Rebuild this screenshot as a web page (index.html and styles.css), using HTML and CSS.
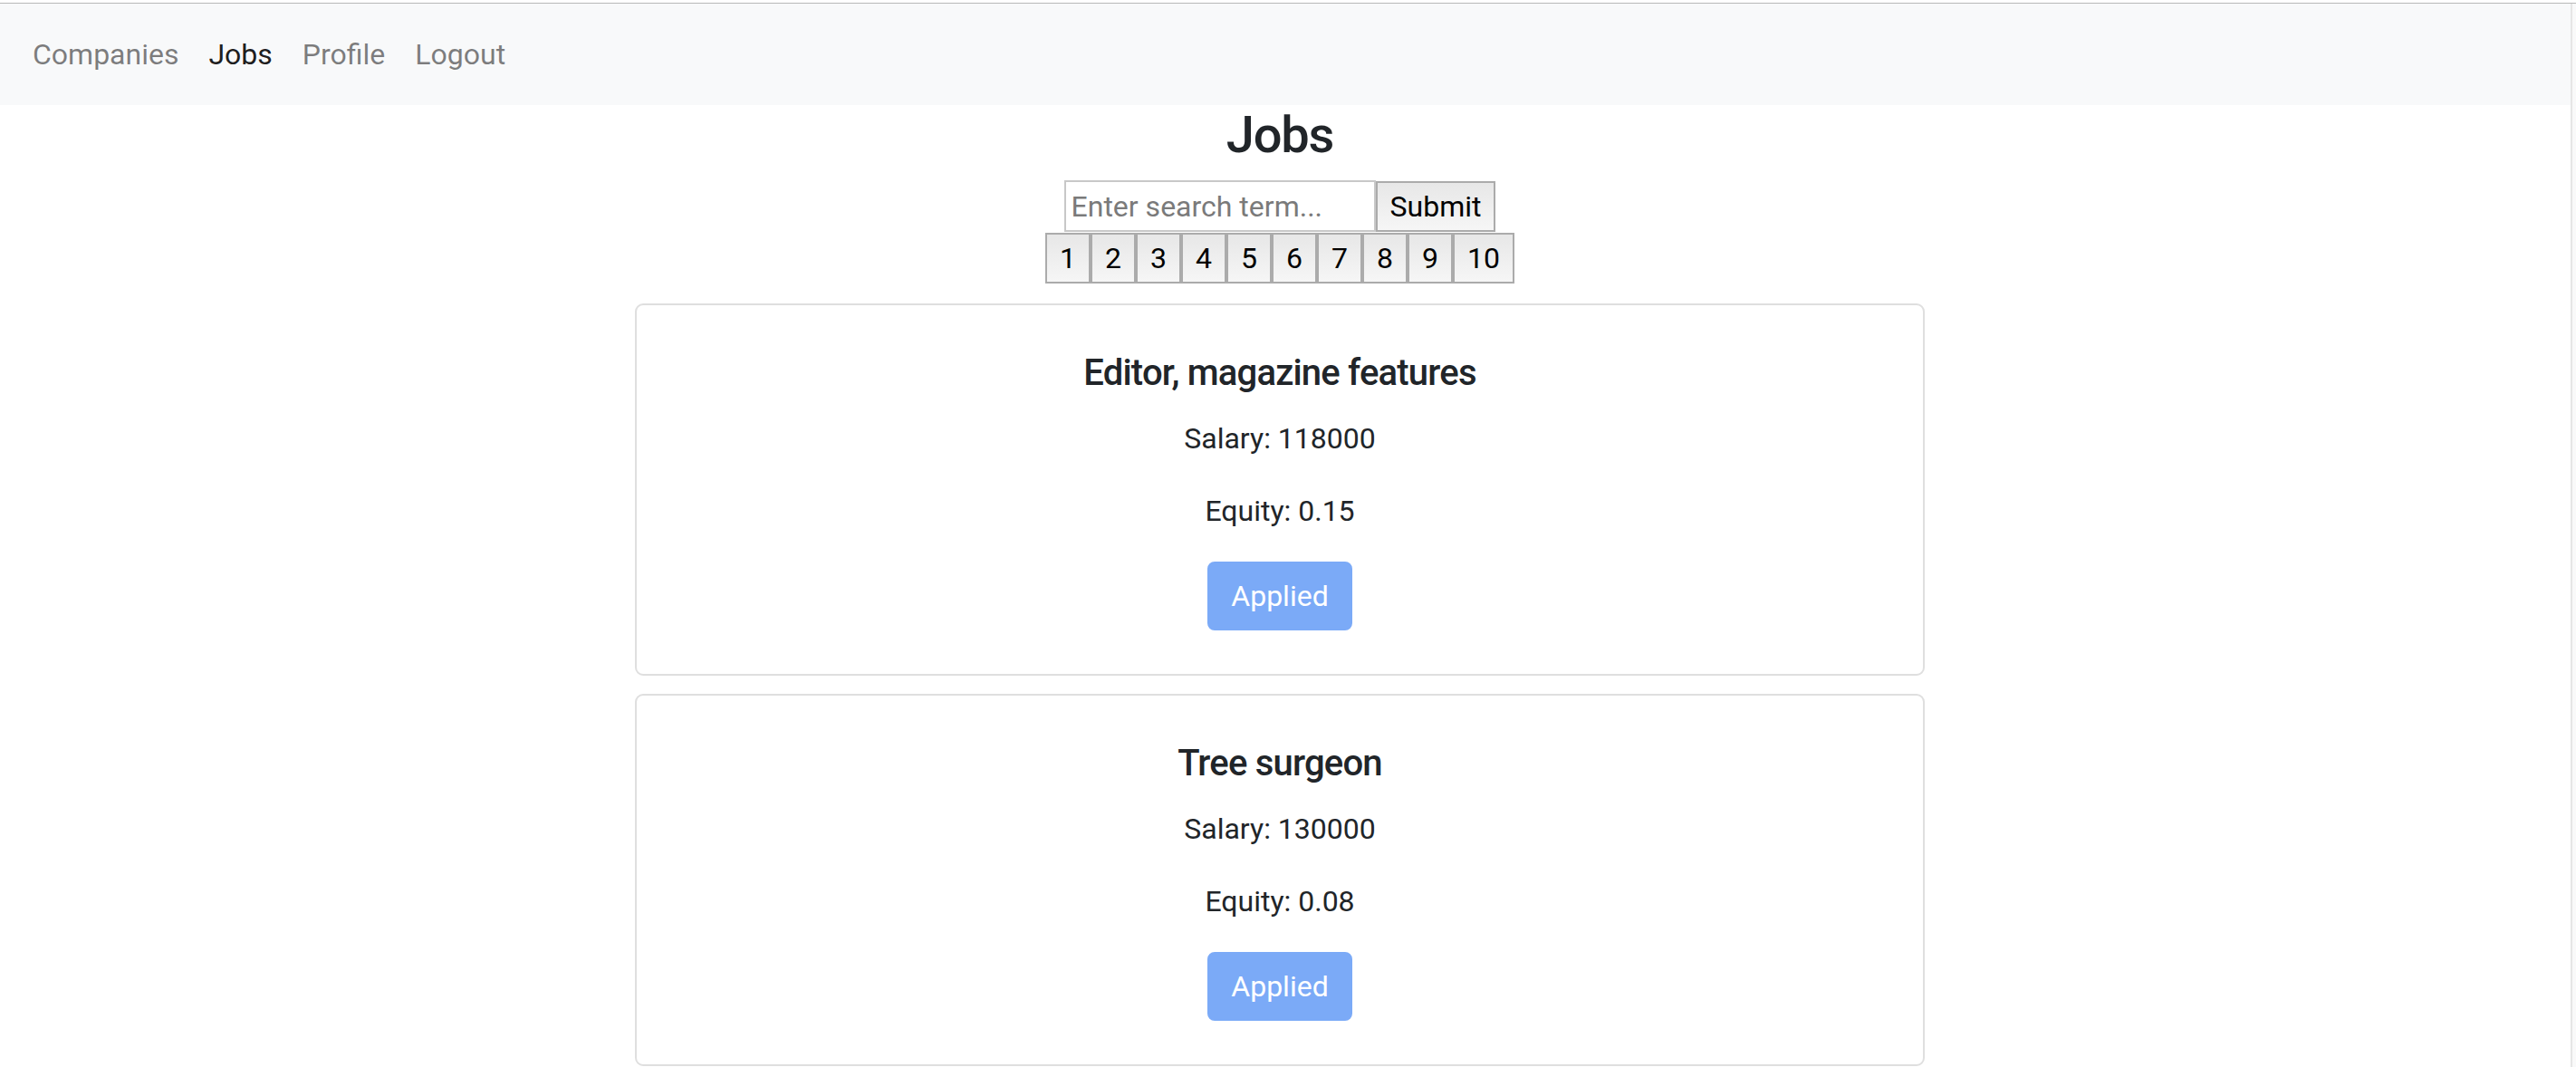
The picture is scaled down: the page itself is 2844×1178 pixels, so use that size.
FILE: index.html
```html
<!DOCTYPE html>
<html lang="en">
<head>
<meta charset="UTF-8">
<title>Jobly - Jobs</title>
<link rel="stylesheet" href="styles.css">
</head>
<body>

<div class="top-line"></div>
<div class="screen">
    <div class="page">
        <nav class="navbar">
            <a class="nav-link" href="#">Companies</a>
            <a class="nav-link active" href="#">Jobs</a>
            <a class="nav-link" href="#">Profile</a>
            <a class="nav-link" href="#">Logout</a>
        </nav>

        <div class="content">
            <h3 class="page-title">Jobs</h3>

            <form class="search-form">
                <input type="text" class="search-input" placeholder="Enter search term...">
                <button type="submit" class="plain-btn">Submit</button>
            </form>

            <div class="pages">
                <button class="plain-btn page-btn">1</button>
                <button class="plain-btn page-btn">2</button>
                <button class="plain-btn page-btn">3</button>
                <button class="plain-btn page-btn">4</button>
                <button class="plain-btn page-btn">5</button>
                <button class="plain-btn page-btn">6</button>
                <button class="plain-btn page-btn">7</button>
                <button class="plain-btn page-btn">8</button>
                <button class="plain-btn page-btn">9</button>
                <button class="plain-btn page-btn">10</button>
            </div>

            <div class="job-list">
                <div class="card">
                    <h5 class="card-title">Editor, magazine features</h5>
                    <p>Salary: 118000</p>
                    <p>Equity: 0.15</p>
                    <button class="btn" disabled>Applied</button>
                </div>
                <div class="card">
                    <h5 class="card-title">Tree surgeon</h5>
                    <p>Salary: 130000</p>
                    <p>Equity: 0.08</p>
                    <button class="btn" disabled>Applied</button>
                </div>
            </div>
        </div>
    </div>
    <div class="scroll-strip"></div>
</div>

</body>
</html>
```

FILE: styles.css
```css
:root {
    --text: #212529;
    --nav-bg: #f8f9fa;
    --muted: rgba(0, 0, 0, 0.5);
    --card-border: #dfdfdf;
    --applied: #7baaf7;
}

body {
    margin: 0;
    background: #fff;
    color: var(--text);
    font-family: Roboto, 'Liberation Sans', sans-serif;
    font-size: 32px;
    line-height: 1.5;
    overflow: hidden;
}

.top-line {
    height: 3px;
    border-bottom: 1px solid #b8b8b8;
}

.screen {
    display: flex;
}

.page {
    flex: 1;
}

.scroll-strip {
    width: 4px;
    border-left: 2px solid #e6e6e6;
    background: #f9f9f9;
}

.navbar {
    display: flex;
    background: var(--nav-bg);
    padding: 16px 20px;
}

.nav-link {
    padding: 16px 17px 16px 16px;
    color: var(--muted);
    text-decoration: none;
}

.nav-link.active {
    color: rgba(0, 0, 0, 0.9);
}

.content {
    display: flex;
    flex-direction: column;
    align-items: center;
    padding-right: 12px;
}

.page-title {
    font-size: 56px;
    font-weight: 500;
    line-height: 1.2;
    letter-spacing: -1.2px;
    margin: 0 0 16px;
}

.search-form {
    display: flex;
    align-items: center;
}

.search-input {
    box-sizing: border-box;
    width: 344px;
    height: 57px;
    padding: 0 6px;
    border: 2px solid #c8c8c8;
    font-family: inherit;
    font-size: 32px;
    color: var(--text);
    outline: none;
}

.search-input::placeholder {
    color: #7a7a7a;
}

.plain-btn {
    margin: 0;
    padding: 2px 14px;
    border: 2px solid #ababab;
    background: linear-gradient(#e7e7e7, #f6f6f6);
    color: #000;
    font-family: inherit;
    font-size: 32px;
    line-height: 48px;
}

.pages {
    display: flex;
    margin-top: 1px;
}

.page-btn {
    padding: 2px 14px;
}

.job-list {
    margin-top: 22px;
}

.card {
    box-sizing: border-box;
    width: 1424px;
    margin-bottom: 20px;
    padding: 51px 48px 48px;
    border: 2px solid var(--card-border);
    border-radius: 9px;
    text-align: center;
}

.card-title {
    font-size: 40px;
    font-weight: 500;
    line-height: 1.2;
    letter-spacing: -0.8px;
    margin: 0 0 24px;
}

.card p {
    margin: 0 0 32px;
}

.btn {
    padding: 12px 24px;
    border: 2px solid var(--applied);
    border-radius: 8px;
    background: var(--applied);
    color: #fff;
    font-family: inherit;
    font-size: 32px;
    line-height: 48px;
}
```
